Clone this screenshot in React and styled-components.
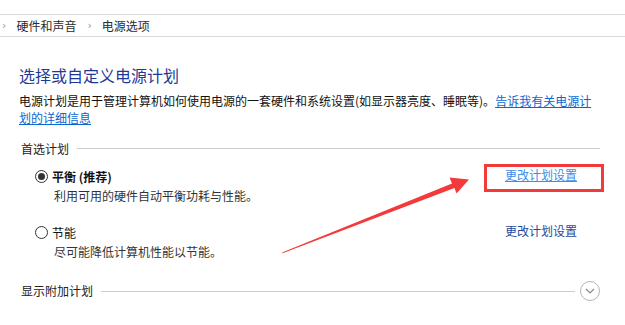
import React from 'react'
import styled, { createGlobalStyle } from 'styled-components'

const GlobalStyle = createGlobalStyle`
  html, body {
    margin: 0;
    padding: 0;
    background: #ffffff;
  }
  body {
    font-family: "Noto Sans CJK SC", "Noto Sans", sans-serif;
    font-size: 12px;
    color: #1a1a1a;
  }
`

const Page = styled.div`
  position: relative;
  width: 625px;
  height: 325px;
  overflow: hidden;
`

const Breadcrumb = styled.div`
  margin-top: 14px;
  height: 21px;
  border-top: 1px solid #dadada;
  border-bottom: 1px solid #dadada;
  display: flex;
  align-items: center;
  padding-left: 2px;
  line-height: 21px;
  color: #2b2b2b;
`

const Crumb = styled.span`
  margin-right: 11px;
`

const Chevron = styled.span`
  color: #9a9a9a;
  font-family: "DejaVu Sans", sans-serif;
  font-size: 11px;
  margin-right: 10px;
`

const Content = styled.div`
  padding: 0 25px 0 19px;
`

const Title = styled.h1`
  margin: 27px 0 0;
  font-size: 16px;
  font-weight: normal;
  line-height: 22px;
  color: #1e3a96;
`

const Description = styled.p`
  margin: 6px 0 0;
  line-height: 17px;
  color: #111;
`

const Link = styled.a`
  color: ${p => (p.$light ? '#3c8ee8' : p.$dark ? '#1c4c9a' : '#0b66d0')};
  text-decoration: ${p => (p.$plain ? 'none' : 'underline')};
  cursor: pointer;
`

const SectionHeader = styled.div`
  display: flex;
  align-items: center;
  margin-top: ${p => p.$top}px;
  margin-left: 2px;
  line-height: ${p => p.$lh || 17}px;
  color: #222;
`

const Rule = styled.div`
  flex: 1;
  height: 1px;
  background: #cccccc;
  margin-left: ${p => p.$gap}px;
`

const PlanRow = styled.div`
  display: grid;
  grid-template-columns: 1fr auto;
  margin-top: ${p => p.$top}px;
  margin-left: 16px;
`

const PlanHead = styled.label`
  display: flex;
  align-items: center;
  line-height: 17px;
  font-weight: ${p => (p.$bold ? 'bold' : 'normal')};
  color: #111;
`

const Radio = styled.span`
  box-sizing: border-box;
  width: 13px;
  height: 13px;
  border-radius: 50%;
  border: 1px solid #333;
  margin-right: 4px;
  display: flex;
  align-items: center;
  justify-content: center;

  &::after {
    content: '';
    display: ${p => (p.$checked ? 'block' : 'none')};
    width: 7px;
    height: 7px;
    border-radius: 50%;
    background: #333;
  }
`

const PlanSub = styled.div`
  margin: 2px 0 0 19px;
  line-height: 17px;
  color: #333;
`

const PlanAction = styled.div`
  padding-right: 23px;
  line-height: 17px;
  margin-top: -2px;
`

const ExpandButton = styled.span`
  box-sizing: border-box;
  width: 20px;
  height: 20px;
  margin-left: 5px;
  border: 1px solid #b4b4b4;
  border-radius: 50%;
  display: flex;
  align-items: center;
  justify-content: center;
`

const Highlight = styled.div`
  position: absolute;
  left: 484px;
  top: 164px;
  width: 120px;
  height: 28px;
  box-sizing: border-box;
  border: 3px solid #f23a3a;
`

const ArrowLayer = styled.svg`
  position: absolute;
  left: 0;
  top: 0;
  pointer-events: none;
`

const plans = [
  { name: '平衡 (推荐)', desc: '利用可用的硬件自动平衡功耗与性能。', checked: true, top: 11 },
  { name: '节能', desc: '尽可能降低计算机性能以节能。', checked: false, top: 20 },
]

export default function App() {
  return (
    <Page>
      <GlobalStyle />
      <Breadcrumb>
        <Chevron>›</Chevron>
        <Crumb>硬件和声音</Crumb>
        <Chevron>›</Chevron>
        <Crumb>电源选项</Crumb>
      </Breadcrumb>
      <Content>
        <Title>选择或自定义电源计划</Title>
        <Description>
          电源计划是用于管理计算机如何使用电源的一套硬件和系统设置(如显示器亮度、睡眠等)。
          <Link>告诉我有关电源计划的详细信息</Link>
        </Description>
        <SectionHeader $top={14}>
          首选计划
          <Rule $gap={8} />
        </SectionHeader>
        {plans.map(plan => (
          <PlanRow key={plan.name} $top={plan.top}>
            <div>
              <PlanHead $bold={plan.checked}>
                <Radio $checked={plan.checked} />
                {plan.name}
              </PlanHead>
              <PlanSub>{plan.desc}</PlanSub>
            </div>
            <PlanAction>
              {plan.checked ? <Link $light>更改计划设置</Link> : <Link $dark $plain>更改计划设置</Link>}
            </PlanAction>
          </PlanRow>
        ))}
        <SectionHeader $top={21} $lh={20}>
          显示附加计划
          <Rule $gap={8} />
          <ExpandButton>
            <svg width="10" height="6" viewBox="0 0 10 6">
              <path d="M1 1 L5 5 L9 1" fill="none" stroke="#8a8a8a" strokeWidth="1.2" />
            </svg>
          </ExpandButton>
        </SectionHeader>
      </Content>
      <Highlight />
      <ArrowLayer width="625" height="325" viewBox="0 0 625 325">
        <polygon
          points="282,252.5 452,183.4 449.5,177.5 469,179.5 456.5,193.5 454.5,188 282.5,253.3"
          fill="#f23a3a"
        />
      </ArrowLayer>
    </Page>
  )
}
